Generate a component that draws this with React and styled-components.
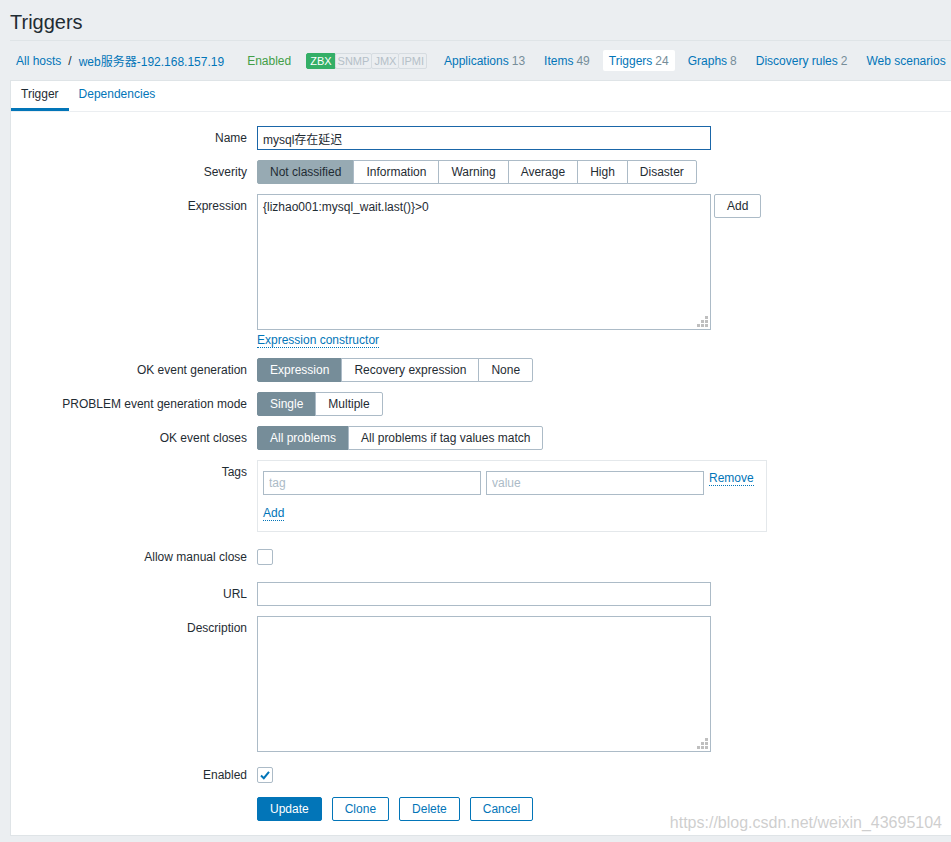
import React from 'react';
import styled, { createGlobalStyle } from 'styled-components';

const GlobalStyle = createGlobalStyle`
    html, body {
        margin: 0;
        padding: 0;
        overflow: hidden;
        background-color: #ebeef1;
    }
    body {
        font-family: "Liberation Sans", Arial, "Noto Sans CJK SC", sans-serif;
        font-size: 12px;
        color: #1f2c33;
    }
`

const severities = ['Not classified', 'Information', 'Warning', 'Average', 'High', 'Disaster'];

function ResizeGrip() {
    return (
        <Grip width="11" height="11" viewBox="0 0 11 11">
            <rect x="8" y="0" width="3" height="3" />
            <rect x="4" y="4" width="3" height="3" />
            <rect x="8" y="4" width="3" height="3" />
            <rect x="0" y="8" width="3" height="3" />
            <rect x="4" y="8" width="3" height="3" />
            <rect x="8" y="8" width="3" height="3" />
        </Grip>
    );
}

function Segmented({ items, active, severity }) {
    return (
        <Group>
            {items.map((item, i) => (
                <Segment key={item} $active={i === active} $severity={severity}>{item}</Segment>
            ))}
        </Group>
    );
}

function App() {
    return (
        <Page>
            <GlobalStyle />
            <Content>
                <Header>
                    <Title>Triggers</Title>
                </Header>
                <HostNav>
                    <NavItem><NavLink>All hosts</NavLink></NavItem>
                    <Slash>/</Slash>
                    <NavItem $gap={11}><NavLink>web服务器-192.168.157.19</NavLink></NavItem>
                    <NavItem><Status>Enabled</Status></NavItem>
                    <Badges>
                        <Badge $on>ZBX</Badge>
                        <Badge>SNMP</Badge>
                        <Badge>JMX</Badge>
                        <Badge>IPMI</Badge>
                    </Badges>
                    <NavItem><NavLink>Applications</NavLink> <Count>13</Count></NavItem>
                    <NavItem><NavLink>Items</NavLink> <Count>49</Count></NavItem>
                    <NavItem $selected><NavLink>Triggers</NavLink> <Count>24</Count></NavItem>
                    <NavItem><NavLink>Graphs</NavLink> <Count>8</Count></NavItem>
                    <NavItem><NavLink>Discovery rules</NavLink> <Count>2</Count></NavItem>
                    <NavItem><NavLink>Web scenarios</NavLink></NavItem>
                </HostNav>
                <Panel>
                    <Tabs>
                        <Tab $active>Trigger</Tab>
                        <Tab>Dependencies</Tab>
                    </Tabs>
                    <Form>
                        <Row>
                            <Label>Name</Label>
                            <TextInput defaultValue="mysql存在延迟" $focused />
                        </Row>
                        <Row>
                            <Label>Severity</Label>
                            <div><Segmented items={severities} active={0} severity /></div>
                        </Row>
                        <Row>
                            <Label>Expression</Label>
                            <Column>
                                <InlineField>
                                    <AreaWrap>
                                        <TextArea defaultValue="{lizhao001:mysql_wait.last()}>0" />
                                        <ResizeGrip />
                                    </AreaWrap>
                                    <Button>Add</Button>
                                </InlineField>
                                <DottedLink $top={3}>Expression constructor</DottedLink>
                            </Column>
                        </Row>
                        <Row>
                            <Label>OK event generation</Label>
                            <div><Segmented items={['Expression', 'Recovery expression', 'None']} active={0} /></div>
                        </Row>
                        <Row>
                            <Label>PROBLEM event generation mode</Label>
                            <div><Segmented items={['Single', 'Multiple']} active={0} /></div>
                        </Row>
                        <Row>
                            <Label>OK event closes</Label>
                            <div><Segmented items={['All problems', 'All problems if tag values match']} active={0} /></div>
                        </Row>
                        <Row>
                            <Label>Tags</Label>
                            <TagsBox>
                                <TagLine>
                                    <TagInput placeholder="tag" />
                                    <TagInput placeholder="value" />
                                    <DottedLink>Remove</DottedLink>
                                </TagLine>
                                <DottedLink $top={11}>Add</DottedLink>
                            </TagsBox>
                        </Row>
                        <Row $center $height={30}>
                            <Label>Allow manual close</Label>
                            <CheckBox />
                        </Row>
                        <Row>
                            <Label>URL</Label>
                            <TextInput />
                        </Row>
                        <Row>
                            <Label>Description</Label>
                            <AreaWrap>
                                <TextArea />
                                <ResizeGrip />
                            </AreaWrap>
                        </Row>
                        <Row $center $height={25}>
                            <Label>Enabled</Label>
                            <CheckBox>
                                <svg width="12" height="12" viewBox="0 0 12 12">
                                    <polyline points="2,6.5 4.8,9.2 10,2.8" fill="none" stroke="#0275b8" strokeWidth="2" />
                                </svg>
                            </CheckBox>
                        </Row>
                        <Row>
                            <span />
                            <Actions>
                                <Button $primary>Update</Button>
                                <Button $outline>Clone</Button>
                                <Button $outline>Delete</Button>
                                <Button $outline>Cancel</Button>
                            </Actions>
                        </Row>
                    </Form>
                </Panel>
            </Content>
            <Watermark>https://blog.csdn.net/weixin_43695104</Watermark>
        </Page>
    );
}

export default App;

const Page = styled.div`
    position: relative;
    overflow: hidden;
    min-height: 842px;
    padding-left: 10px;
`

const Content = styled.div`
    width: 1000px;
`

const Header = styled.div`
    padding: 10px 0 6px;
    border-bottom: 1px solid #dfe4e7;
`

const Title = styled.h1`
    margin: 0;
    font-size: 20px;
    font-weight: normal;
    line-height: 24px;
    color: #1f2c33;
`

const HostNav = styled.div`
    display: flex;
    align-items: center;
    height: 39px;
    white-space: nowrap;
`

const NavItem = styled.div`
    display: flex;
    align-items: center;
    gap: 3px;
    height: 21px;
    padding: 0 6px;
    margin-right: ${props => props.$gap ?? 7}px;
    background-color: ${props => props.$selected ? '#ffffff' : 'transparent'};
    border-radius: 2px;

    &:first-child {
        margin-right: 0;
    }
`

const NavLink = styled.span`
    color: #0275b8;
`

const Count = styled.span`
    color: #768d99;
`

const Slash = styled.span`
    margin: 0 1px;
    color: #1f2c33;
`

const Status = styled.span`
    color: #429e47;
`

const Badges = styled.div`
    display: flex;
    margin: 0 11px 0 2px;
`

const Badge = styled.span`
    height: 14px;
    line-height: 14px;
    padding: 0 2px;
    font-size: 11px;
    border: 1px solid ${props => props.$on ? '#34af67' : '#d6dce1'};
    background-color: ${props => props.$on ? '#34af67' : 'transparent'};
    color: ${props => props.$on ? '#ffffff' : '#b5c0c8'};
    border-radius: 2px;

    &:first-child {
        padding: 0 3px;
    }
    & + & {
        margin-left: -1px;
    }
`

const Panel = styled.div`
    background-color: #ffffff;
    border: 1px solid #dfe4e7;
    padding-bottom: 14px;
`

const Tabs = styled.div`
    display: flex;
    border-bottom: 1px solid #ebeef1;
`

const Tab = styled.div`
    height: 27px;
    line-height: 27px;
    padding: 0 10px;
    color: ${props => props.$active ? '#1f2c33' : '#0275b8'};
    border-bottom: 3px solid ${props => props.$active ? '#0275b8' : 'transparent'};
`

const Form = styled.div`
    display: flex;
    flex-direction: column;
    gap: 10px;
    padding-top: 14px;
`

const Row = styled.div`
    display: grid;
    grid-template-columns: 236px 1fr;
    column-gap: 10px;
    align-items: ${props => props.$center ? 'center' : 'start'};
    min-height: ${props => props.$height ? props.$height + 'px' : 'auto'};
`

const Label = styled.div`
    text-align: right;
    line-height: 24px;
    white-space: nowrap;
`

const TextInput = styled.input`
    box-sizing: border-box;
    width: 454px;
    height: 24px;
    padding: 0 5px;
    margin: 0;
    font: inherit;
    color: #1f2c33;
    border: 1px solid ${props => props.$focused ? '#1a66a8' : '#acbbc7'};
    border-radius: 0;
    outline: none;
    background-color: #ffffff;
`

const Column = styled.div`
    display: flex;
    flex-direction: column;
    align-items: flex-start;
`

const InlineField = styled.div`
    display: flex;
    align-items: flex-start;
    gap: 3px;
`

const AreaWrap = styled.div`
    position: relative;
    width: 454px;
    height: 136px;
`

const TextArea = styled.textarea`
    box-sizing: border-box;
    display: block;
    width: 100%;
    height: 100%;
    margin: 0;
    padding: 5px 5px;
    font: inherit;
    line-height: 14px;
    color: #1f2c33;
    border: 1px solid #acbbc7;
    border-radius: 0;
    resize: none;
    outline: none;
`

const Grip = styled.svg`
    position: absolute;
    right: 3px;
    bottom: 3px;
    fill: #bfbfbf;
`

const Group = styled.div`
    display: inline-flex;
`

const Segment = styled.div`
    box-sizing: border-box;
    height: 24px;
    line-height: 22px;
    padding: 0 12px;
    white-space: nowrap;
    border: 1px solid ${props => props.$active ? (props.$severity ? '#97aab3' : '#768d99') : '#acbbc7'};
    background-color: ${props => props.$active ? (props.$severity ? '#97aab3' : '#768d99') : '#ffffff'};
    color: ${props => props.$active && !props.$severity ? '#ffffff' : '#1f2c33'};

    & + & {
        margin-left: -1px;
    }
    &:first-child {
        border-radius: 2px 0 0 2px;
    }
    &:last-child {
        border-radius: 0 2px 2px 0;
    }
`

const Button = styled.div`
    box-sizing: border-box;
    height: 24px;
    line-height: 22px;
    padding: 0 12px;
    border-radius: 2px;
    white-space: nowrap;
    border: 1px solid ${props => props.$primary || props.$outline ? '#0275b8' : '#acbbc7'};
    background-color: ${props => props.$primary ? '#0275b8' : '#ffffff'};
    color: ${props => props.$primary ? '#ffffff' : props.$outline ? '#0275b8' : '#1f2c33'};
`

const DottedLink = styled.span`
    display: inline-block;
    margin-top: ${props => props.$top || 0}px;
    line-height: 14px;
    color: #0275b8;
    border-bottom: 1px dotted #0275b8;
    align-self: flex-start;
`

const TagsBox = styled.div`
    box-sizing: border-box;
    display: flex;
    flex-direction: column;
    width: 510px;
    padding: 10px 5px 10px;
    border: 1px solid #e4e8eb;
`

const TagLine = styled.div`
    display: flex;
    align-items: center;
    gap: 5px;
`

const TagInput = styled.input`
    box-sizing: border-box;
    width: 218px;
    height: 24px;
    padding: 0 5px;
    margin: 0;
    font: inherit;
    border: 1px solid #acbbc7;
    border-radius: 0;
    outline: none;

    &::placeholder {
        color: #acbbc7;
    }
`

const CheckBox = styled.div`
    box-sizing: border-box;
    display: flex;
    align-items: center;
    justify-content: center;
    width: 16px;
    height: 16px;
    border: 1px solid #acbbc7;
    border-radius: 2px;
    background-color: #ffffff;
`

const Actions = styled.div`
    display: flex;
    gap: 10px;
`

const Watermark = styled.div`
    position: absolute;
    right: 9px;
    top: 814px;
    font-size: 16px;
    color: rgba(190, 190, 190, 0.75);
    pointer-events: none;
`
